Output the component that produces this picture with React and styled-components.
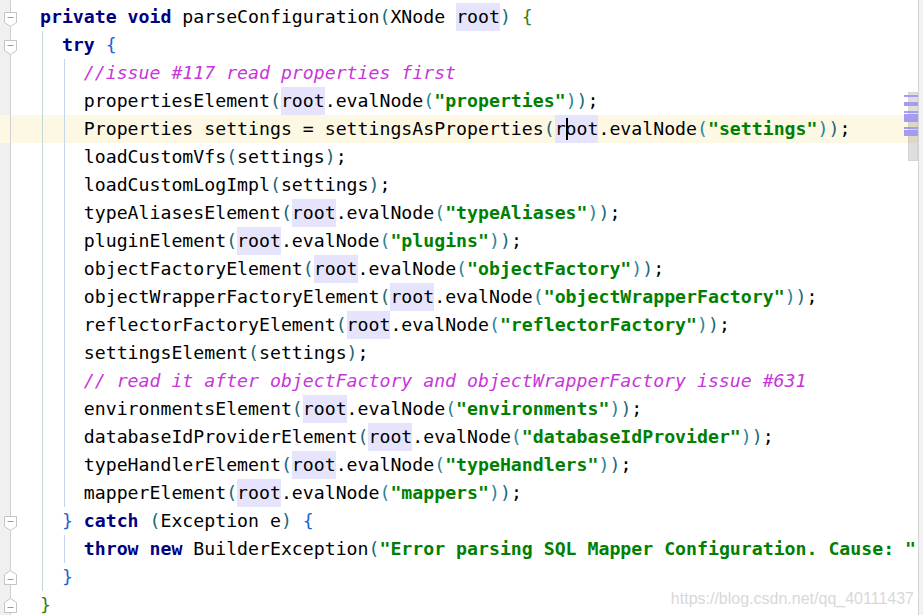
import React from 'react';
import styled, { createGlobalStyle } from 'styled-components';

const GlobalStyle = createGlobalStyle`
  html, body {
    margin: 0;
    padding: 0;
    background: #fff;
    overflow: hidden;
  }
`;

const COLORS = {
  kw: '#000080',
  str: '#008000',
  cm: '#c636d9',
  p1: '#1b6878',
  p2: '#2a8597',
  b0: '#3b7a18',
  b1: '#1e63d2',
};

// tokens: [type, text]; plain text is a bare string
const evalLine = (fn, arg) => [
  fn, ['p1', '('], ['hl', 'root'], '.evalNode', ['p2', '('], ['str', `"${arg}"`],
  ['p2', ')'], ['p1', ')'], ';',
];
const callLine = (fn, arg) => [fn, ['p1', '('], arg, ['p1', ')'], ';'];

// level, guides (how many indent guides drawn), tokens, fold marker
const lines = [
  { level: 0, guides: 0, fold: 'start', tokens: [['kw', 'private'], ' ', ['kw', 'void'], ' parseConfiguration', ['p1', '('], 'XNode ', ['hl', 'root'], ['p1', ')'], ' ', ['b0', '{']] },
  { level: 1, guides: 1, fold: 'start', tokens: [['kw', 'try'], ' ', ['b1', '{']] },
  { level: 2, guides: 2, tokens: [['cm', '//issue #117 read properties first']] },
  { level: 2, guides: 2, tokens: evalLine('propertiesElement', 'properties') },
  { level: 2, guides: 2, current: true, tokens: ['Properties settings = settingsAsProperties', ['p1', '('], ['caret', 'root'], '.evalNode', ['p2', '('], ['str', '"settings"'], ['p2', ')'], ['p1', ')'], ';'] },
  { level: 2, guides: 2, tokens: callLine('loadCustomVfs', 'settings') },
  { level: 2, guides: 2, tokens: callLine('loadCustomLogImpl', 'settings') },
  { level: 2, guides: 2, tokens: evalLine('typeAliasesElement', 'typeAliases') },
  { level: 2, guides: 2, tokens: evalLine('pluginElement', 'plugins') },
  { level: 2, guides: 2, tokens: evalLine('objectFactoryElement', 'objectFactory') },
  { level: 2, guides: 2, tokens: evalLine('objectWrapperFactoryElement', 'objectWrapperFactory') },
  { level: 2, guides: 2, tokens: evalLine('reflectorFactoryElement', 'reflectorFactory') },
  { level: 2, guides: 2, tokens: callLine('settingsElement', 'settings') },
  { level: 2, guides: 2, tokens: [['cm', '// read it after objectFactory and objectWrapperFactory issue #631']] },
  { level: 2, guides: 2, tokens: evalLine('environmentsElement', 'environments') },
  { level: 2, guides: 2, tokens: evalLine('databaseIdProviderElement', 'databaseIdProvider') },
  { level: 2, guides: 2, tokens: evalLine('typeHandlerElement', 'typeHandlers') },
  { level: 2, guides: 2, tokens: evalLine('mapperElement', 'mappers') },
  { level: 1, guides: 1, fold: 'start', tokens: [['b1', '}'], ' ', ['kw', 'catch'], ' ', ['p1', '('], 'Exception e', ['p1', ')'], ' ', ['b1', '{']] },
  // only the part that fits before the right edge is shown
  { level: 2, guides: 2, tokens: [['kw', 'throw'], ' ', ['kw', 'new'], ' BuilderException', ['p1', '('], ['str', '"Error parsing SQL Mapper Configuration. Cause: "']] },
  { level: 1, guides: 1, fold: 'end', tokens: [['b1', '}']] },
  { level: 0, guides: 0, fold: 'end', tokens: [['b0', '}']] },
];

const stripeMarks = [
  { top: 95, h: 2 },
  { top: 102, h: 4 },
  { top: 111, h: 2 },
  { top: 114, h: 8 },
  { top: 127, h: 2 },
  { top: 130, h: 6 },
];

const App = () => (
  <>
    <GlobalStyle />
    <Window>
      <Editor>
        {lines.map((line, i) => (
          <Row key={i} $current={line.current}>
            <GutterCell>
              {line.fold && <FoldMarker type={line.fold} />}
            </GutterCell>
            <Code>
              {Array.from({ length: line.level }).map((_, g) => (
                <Indent key={g} $guide={g < line.guides} $level={g} />
              ))}
              {line.tokens.map((t, j) => renderToken(t, j))}
            </Code>
          </Row>
        ))}
        <Thumb />
        {stripeMarks.map((m, i) => (
          <StripeMark key={i} style={{ top: m.top, height: m.h }} />
        ))}
      </Editor>
      <RightEdge />
      <Watermark>https://blog.csdn.net/qq_40111437</Watermark>
    </Window>
  </>
);

const renderToken = (t, key) => {
  if (typeof t === 'string') return <span key={key}>{t}</span>;
  const [type, text] = t;
  if (type === 'hl') return <Usage key={key}>{text}</Usage>;
  if (type === 'caret')
    return (
      <Usage key={key}>
        {text[0]}
        <Caret />
        {text.slice(1)}
      </Usage>
    );
  return (
    <Token key={key} $type={type}>
      {text}
    </Token>
  );
};

const FoldMarker = ({ type }) => (
  <FoldIcon $type={type} width="13" height="15" viewBox="0 0 13 15">
    {type === 'start' ? (
      <path d="M0.5 0.5H12.5V10.5L6.5 14.5L0.5 10.5Z" fill="#fff" stroke="#c4c4c4" />
    ) : (
      <path d="M0.5 14.5H12.5V4.5L6.5 0.5L0.5 4.5Z" fill="#fff" stroke="#c4c4c4" />
    )}
    <line
      x1="3.5"
      x2="9.5"
      y1={type === 'start' ? 5.5 : 9.5}
      y2={type === 'start' ? 5.5 : 9.5}
      stroke="#9a9a9a"
    />
  </FoldIcon>
);

const Window = styled.div`
  position: relative;
  display: flex;
  width: 923px;
  height: 615px;
  overflow: hidden;
`;

const Editor = styled.div`
  position: relative;
  flex: 1;
  padding-top: 3px;
  overflow: hidden;
  background: linear-gradient(to right, #f0f0f0 10px, #d0d0d0 10px, #d0d0d0 11px, #fff 11px);
  font-family: 'DejaVu Sans Mono', 'Liberation Mono', monospace;
  font-size: 18.2px;
  color: #000;
`;

const Row = styled.div`
  display: flex;
  height: 28px;
  line-height: 28px;
  background: ${(p) => (p.$current ? '#fdf8e4' : 'transparent')};
`;

const GutterCell = styled.div`
  position: relative;
  flex: 0 0 10px;
  border-right: 1px solid #d0d0d0;
`;

const FoldIcon = styled.svg`
  position: absolute;
  left: 4px;
  top: ${(p) => (p.$type === 'start' ? '9px' : '7px')};
  display: block;
`;

const Code = styled.div`
  flex: 1;
  padding-left: 29px;
  white-space: pre;
`;

const Indent = styled.span`
  display: inline-block;
  width: 2ch;
  height: 28px;
  vertical-align: top;
  background: ${(p) => {
    if (!p.$guide) return 'none';
    const c = p.$level === 0 ? '#c3d8d1' : '#c3d5ef';
    return `linear-gradient(to right, transparent 2px, ${c} 2px, ${c} 3px, transparent 3px)`;
  }};
`;

const Token = styled.span`
  color: ${(p) => COLORS[p.$type]};
  font-weight: ${(p) => (p.$type === 'kw' || p.$type === 'str' ? 700 : 400)};
  font-style: ${(p) => (p.$type === 'cm' ? 'italic' : 'normal')};
`;

const Usage = styled.span`
  display: inline-block;
  height: 28px;
  background: #e5e4fc;
`;

const Caret = styled.span`
  display: inline-block;
  width: 2px;
  height: 22px;
  margin-right: -2px;
  background: #000;
  vertical-align: -5px;
`;

const Thumb = styled.div`
  position: absolute;
  top: 92px;
  right: 0;
  width: 10px;
  height: 69px;
  background: rgba(0, 0, 0, 0.13);
  box-sizing: border-box;
  border: 1px solid rgba(0, 0, 0, 0.04);
`;

const StripeMark = styled.div`
  position: absolute;
  right: 0;
  width: 14px;
  background: #a59cef;
`;

const RightEdge = styled.div`
  flex: 0 0 4px;
  border-left: 1px solid #d4d4d4;
  background: #f2f2f2;
`;

const Watermark = styled.div`
  position: absolute;
  right: 9px;
  bottom: 7px;
  font-family: 'Liberation Sans', Arial, sans-serif;
  font-size: 16px;
  color: #d8d8d8;
  text-shadow: 0 0 1px #fff;
  pointer-events: none;
`;

export default App;
